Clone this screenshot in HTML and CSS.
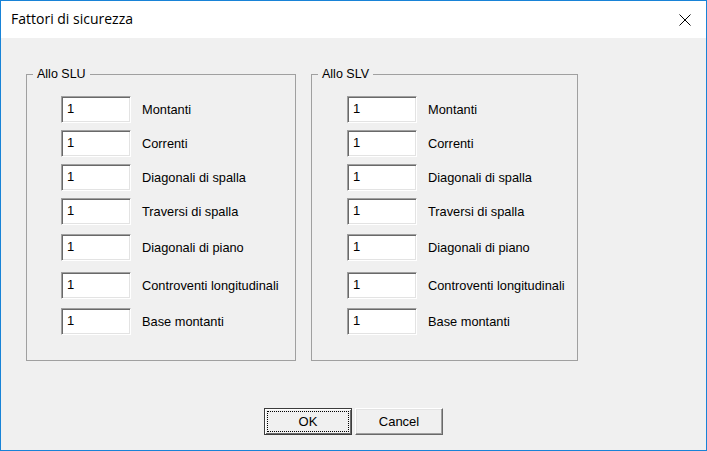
FILE: index.html
```html
<!DOCTYPE html>
<html lang="it">
<head>
<meta charset="utf-8">
<title>Fattori di sicurezza</title>
<link rel="stylesheet" href="styles.css">
</head>
<body>
<div class="window">
  <div class="titlebar">
    <span class="title">Fattori di sicurezza</span>
    <button class="close" type="button" aria-label="Chiudi">
      <svg width="12" height="12" viewBox="0 0 12 12"><path d="M0.5 0.5 L11.5 11.5 M11.5 0.5 L0.5 11.5" stroke="#000" stroke-width="1" fill="none"/></svg>
    </button>
  </div>
  <div class="groups">
    <fieldset class="group slu">
      <legend>Allo SLU</legend>
      <div class="rows">
        <div class="row r1"><input class="field" type="text" value="1"><span class="label">Montanti</span></div>
        <div class="row r2"><input class="field" type="text" value="1"><span class="label">Correnti</span></div>
        <div class="row r3"><input class="field" type="text" value="1"><span class="label">Diagonali di spalla</span></div>
        <div class="row r4"><input class="field" type="text" value="1"><span class="label">Traversi di spalla</span></div>
        <div class="row r5"><input class="field" type="text" value="1"><span class="label">Diagonali di piano</span></div>
        <div class="row r6"><input class="field" type="text" value="1"><span class="label">Controventi longitudinali</span></div>
        <div class="row r7"><input class="field" type="text" value="1"><span class="label">Base montanti</span></div>
      </div>
    </fieldset>
    <fieldset class="group slv">
      <legend>Allo SLV</legend>
      <div class="rows">
        <div class="row r1"><input class="field" type="text" value="1"><span class="label">Montanti</span></div>
        <div class="row r2"><input class="field" type="text" value="1"><span class="label">Correnti</span></div>
        <div class="row r3"><input class="field" type="text" value="1"><span class="label">Diagonali di spalla</span></div>
        <div class="row r4"><input class="field" type="text" value="1"><span class="label">Traversi di spalla</span></div>
        <div class="row r5"><input class="field" type="text" value="1"><span class="label">Diagonali di piano</span></div>
        <div class="row r6"><input class="field" type="text" value="1"><span class="label">Controventi longitudinali</span></div>
        <div class="row r7"><input class="field" type="text" value="1"><span class="label">Base montanti</span></div>
      </div>
    </fieldset>
  </div>
  <div class="buttons">
    <button class="btn btn-default" type="button">OK</button>
    <button class="btn" type="button">Cancel</button>
  </div>
</div>
</body>
</html>
```
FILE: styles.css
```css
html, body {
  margin: 0;
  padding: 0;
}
body {
  width: 707px;
  height: 451px;
  overflow: hidden;
  background: #f0f0f0;
}
.window {
  box-sizing: border-box;
  width: 707px;
  height: 451px;
  border: 1px solid #1883d7;
  background: #f0f0f0;
  display: flex;
  flex-direction: column;
  font-family: "Liberation Sans", Arial, sans-serif;
  color: #000;
}
.titlebar {
  height: 37px;
  flex: none;
  background: #fff;
  display: flex;
  align-items: center;
}
.title {
  flex: 1;
  padding-left: 10px;
  font-family: "Open Sans", "Noto Sans", sans-serif;
  font-size: 14px;
  line-height: 20px;
  margin-top: -1px;
}
.close {
  width: 42px;
  height: 37px;
  border: 0;
  padding: 0;
  margin: 0;
  background: transparent;
  display: flex;
  align-items: center;
  justify-content: center;
}
.close svg {
  display: block;
  margin-top: 1px;
}
.groups {
  display: flex;
  gap: 15px;
  padding-left: 25px;
  margin-top: 29px;
}
.group {
  box-sizing: border-box;
  margin: 0;
  min-width: 0;
  border: 1px solid #a0a0a0;
  padding: 0;
}
.slu { width: 270px; }
.slv { width: 267px; }
.group legend {
  margin-left: 6px;
  padding: 0 4px;
  font-size: 12.5px;
  line-height: 14px;
}
.rows {
  padding: 15px 0 25px 34px;
}
.slv .rows { padding-left: 35px; }
.row {
  display: flex;
  align-items: center;
  height: 27px;
}
.r2, .r3, .r4 { margin-top: 7px; }
.r5, .r7 { margin-top: 9px; }
.r6 { margin-top: 11px; }
.field {
  box-sizing: border-box;
  width: 70px;
  height: 27px;
  margin: 0;
  padding: 5px 5px 7px;
  border-style: solid;
  border-width: 1px;
  border-color: #a0a0a0 #ffffff #ffffff #a0a0a0;
  box-shadow: inset 1px 1px 0 #696969, inset -1px -1px 0 #e3e3e3;
  background: #fff;
  font-family: "Liberation Sans", Arial, sans-serif;
  font-size: 13px;
  line-height: 13px;
  color: #000;
  outline: none;
}
.label {
  margin-left: 11px;
  font-size: 12.8px;
  line-height: 15px;
  white-space: nowrap;
}
.buttons {
  display: flex;
  justify-content: center;
  gap: 3px;
  margin-top: 47px;
}
.btn {
  box-sizing: border-box;
  width: 88px;
  height: 27px;
  margin: 0;
  padding: 0;
  font-family: "Liberation Sans", Arial, sans-serif;
  font-size: 13px;
  color: #000;
  background: #f0f0f0;
  border-style: solid;
  border-width: 1px;
  border-color: #ffffff #696969 #696969 #ffffff;
  box-shadow: inset -1px -1px 0 #a0a0a0, inset 1px 1px 0 #e3e3e3;
}
.btn-default {
  border-color: #3c3c3c;
  box-shadow: inset 1px 1px 0 #ffffff, inset -1px -1px 0 #696969;
  outline: 1px dotted #000;
  outline-offset: -4px;
}
```
